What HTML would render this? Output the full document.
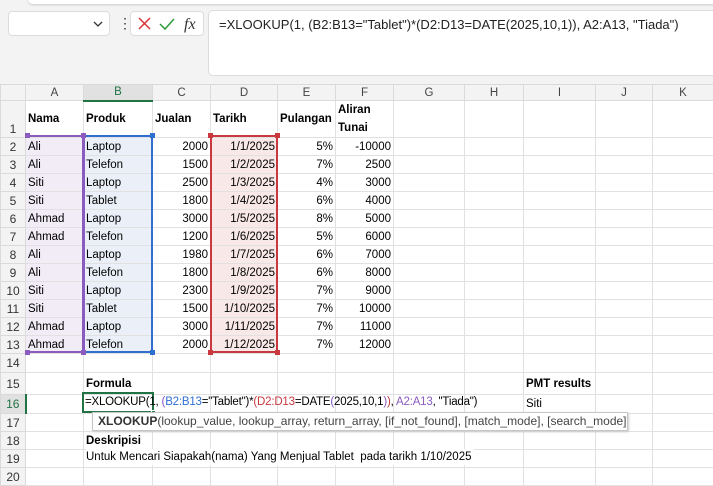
<!DOCTYPE html>
<html><head><meta charset="utf-8"><style>
*{box-sizing:border-box;margin:0;padding:0}
body{width:713px;height:482px;overflow:hidden;background:#f3f3f3;font-family:"Liberation Sans",Arial,sans-serif;position:relative;font-size:12px;color:#000}
.abs{position:absolute}
table{position:absolute;left:0;top:84px;width:713px;border-collapse:collapse;table-layout:fixed;background:#fff}
td{border:1px solid #e1e1e1;height:18px;padding:0 2px;white-space:nowrap;overflow:hidden;font-size:11.5px;line-height:16px;vertical-align:middle}
td.rh{background:#f3f3f3;color:#333;text-align:center;border-color:#dadada;padding:0;font-size:12px}
tr.ch td{background:#f3f3f3;color:#444;text-align:center;height:16px;border-color:#dadada;font-size:11.5px;line-height:14px;vertical-align:middle}
.r{text-align:right}
b{font-weight:bold}
.pu{background:#f1ecf6}.bl{background:#ebf0f8}.rd{background:#f9e8e8}
</style></head><body>
<div class="abs" style="left:28px;top:-6px;width:690px;height:10px;background:#fff;border-radius:6px;box-shadow:0 1px 2px #ccc"></div>
<div class="abs" style="left:8px;top:11px;width:102px;height:25px;background:#fff;border:1px solid #dcdcdc;border-radius:4px"></div>
<svg class="abs" style="left:92px;top:19px" width="12" height="10"><path d="M2 3 L6 7 L10 3" fill="none" stroke="#333" stroke-width="1.3"/></svg>
<div class="abs" style="left:118px;top:15px;width:3px;height:16px;color:#333;font-size:14px;line-height:16px">⋮</div>
<div class="abs" style="left:130px;top:11px;width:74px;height:25px;background:#fff;border:1px solid #dcdcdc;border-radius:4px"></div>
<svg class="abs" style="left:136px;top:15px" width="66" height="18"><path d="M3 3 L14 14 M14 3 L3 14" stroke="#d33" stroke-width="1.5"/><path d="M24 9 L29 14 L38 4" fill="none" stroke="#2e9a3a" stroke-width="1.5"/><text x="48" y="14" font-family="Liberation Serif,serif" font-style="italic" font-size="16" fill="#333">fx</text></svg>
<div class="abs" style="left:208px;top:10px;width:520px;height:66px;background:#fff;border:1px solid #dcdcdc;border-radius:5px"></div>
<div class="abs" style="left:219px;top:17px;font-size:13px;color:#222">=XLOOKUP(1, (B2:B13="Tablet")*(D2:D13=DATE(2025,10,1)), A2:A13, "Tiada")</div>
<table>
<colgroup><col style="width:25px"><col style="width:58px"><col style="width:69px"><col style="width:58px"><col style="width:67px"><col style="width:58px"><col style="width:58px"><col style="width:71px"><col style="width:59px"><col style="width:72px"><col style="width:57px"><col style="width:61px"></colgroup>
<tr class="ch"><td style="background:#f3f3f3"></td><td>A</td><td style="background:#e1e1e1;border-bottom:2px solid #217346;color:#217346">B</td><td>C</td><td>D</td><td>E</td><td>F</td><td>G</td><td>H</td><td>I</td><td>J</td><td>K</td></tr>
<tr><td class="rh" style="height:35px;vertical-align:bottom">1</td><td><b>Nama</b></td><td><b>Produk</b></td><td><b>Jualan</b></td><td><b>Tarikh</b></td><td><b>Pulangan</b></td><td style="line-height:18px"><b>Aliran<br>Tunai</b></td><td></td><td></td><td></td><td></td><td></td></tr>
<tr><td class="rh">2</td><td class="pu">Ali</td><td class="bl">Laptop</td><td class="r">2000</td><td class="r rd">1/1/2025</td><td class="r">5%</td><td class="r">-10000</td><td></td><td></td><td></td><td></td><td></td></tr>
<tr><td class="rh">3</td><td class="pu">Ali</td><td class="bl">Telefon</td><td class="r">1500</td><td class="r rd">1/2/2025</td><td class="r">7%</td><td class="r">2500</td><td></td><td></td><td></td><td></td><td></td></tr>
<tr><td class="rh">4</td><td class="pu">Siti</td><td class="bl">Laptop</td><td class="r">2500</td><td class="r rd">1/3/2025</td><td class="r">4%</td><td class="r">3000</td><td></td><td></td><td></td><td></td><td></td></tr>
<tr><td class="rh">5</td><td class="pu">Siti</td><td class="bl">Tablet</td><td class="r">1800</td><td class="r rd">1/4/2025</td><td class="r">6%</td><td class="r">4000</td><td></td><td></td><td></td><td></td><td></td></tr>
<tr><td class="rh">6</td><td class="pu">Ahmad</td><td class="bl">Laptop</td><td class="r">3000</td><td class="r rd">1/5/2025</td><td class="r">8%</td><td class="r">5000</td><td></td><td></td><td></td><td></td><td></td></tr>
<tr><td class="rh">7</td><td class="pu">Ahmad</td><td class="bl">Telefon</td><td class="r">1200</td><td class="r rd">1/6/2025</td><td class="r">5%</td><td class="r">6000</td><td></td><td></td><td></td><td></td><td></td></tr>
<tr><td class="rh">8</td><td class="pu">Ali</td><td class="bl">Laptop</td><td class="r">1980</td><td class="r rd">1/7/2025</td><td class="r">6%</td><td class="r">7000</td><td></td><td></td><td></td><td></td><td></td></tr>
<tr><td class="rh">9</td><td class="pu">Ali</td><td class="bl">Telefon</td><td class="r">1800</td><td class="r rd">1/8/2025</td><td class="r">6%</td><td class="r">8000</td><td></td><td></td><td></td><td></td><td></td></tr>
<tr><td class="rh">10</td><td class="pu">Siti</td><td class="bl">Laptop</td><td class="r">2300</td><td class="r rd">1/9/2025</td><td class="r">7%</td><td class="r">9000</td><td></td><td></td><td></td><td></td><td></td></tr>
<tr><td class="rh">11</td><td class="pu">Siti</td><td class="bl">Tablet</td><td class="r">1500</td><td class="r rd">1/10/2025</td><td class="r">7%</td><td class="r">10000</td><td></td><td></td><td></td><td></td><td></td></tr>
<tr><td class="rh">12</td><td class="pu">Ahmad</td><td class="bl">Laptop</td><td class="r">3000</td><td class="r rd">1/11/2025</td><td class="r">7%</td><td class="r">11000</td><td></td><td></td><td></td><td></td><td></td></tr>
<tr><td class="rh">13</td><td class="pu">Ahmad</td><td class="bl">Telefon</td><td class="r">2000</td><td class="r rd">1/12/2025</td><td class="r">7%</td><td class="r">12000</td><td></td><td></td><td></td><td></td><td></td></tr>
<tr><td class="rh" style="height:19px">14</td><td></td><td></td><td></td><td></td><td></td><td></td><td></td><td></td><td></td><td></td><td></td></tr>
<tr><td class="rh" style="height:22px">15</td><td></td><td><b>Formula</b></td><td></td><td></td><td></td><td></td><td></td><td></td><td><b>PMT results</b></td><td></td><td></td></tr>
<tr><td class="rh" style="height:19px;background:#e1e1e1;color:#217346;border-right:2px solid #217346">16</td><td></td><td></td><td></td><td></td><td></td><td></td><td></td><td></td><td>Siti</td><td></td><td></td></tr>
<tr><td class="rh">17</td><td></td><td></td><td></td><td></td><td></td><td></td><td></td><td></td><td></td><td></td><td></td></tr>
<tr><td class="rh">18</td><td></td><td><b>Deskripisi</b></td><td></td><td></td><td></td><td></td><td></td><td></td><td></td><td></td><td></td></tr>
<tr><td class="rh">19</td><td></td><td></td><td></td><td></td><td></td><td></td><td></td><td></td><td></td><td></td><td></td></tr>
<tr><td class="rh">20</td><td></td><td></td><td></td><td></td><td></td><td></td><td></td><td></td><td></td><td></td><td></td></tr>
</table>
<div class="abs" style="left:86px;top:449px;font-size:11.5px;line-height:16px;white-space:nowrap;background:#fff;padding-right:2px">Untuk Mencari Siapakah(nama) Yang Menjual Tablet&nbsp; pada tarikh 1/10/2025</div>
<!-- range borders -->
<div class="abs" style="left:27px;top:135px;width:57px;height:218px;border-bottom:2px solid #8a5cc0;border-top:2px solid #8a5cc0;border-right:2px solid #8a5cc0"></div>
<div class="abs" style="left:83px;top:135px;width:70px;height:218px;border:2px solid #2f6fd0;border-left:2px solid #8a5cc0"></div>
<div class="abs" style="left:210px;top:135px;width:68px;height:218px;border:2px solid #c9383f"></div>
<div class="abs" style="left:25px;top:133px;width:5px;height:5px;background:#8a5cc0"></div>
<div class="abs" style="left:81px;top:133px;width:5px;height:5px;background:#8a5cc0"></div>
<div class="abs" style="left:25px;top:350px;width:5px;height:5px;background:#8a5cc0"></div>
<div class="abs" style="left:81px;top:350px;width:5px;height:5px;background:#8a5cc0"></div>
<div class="abs" style="left:150px;top:133px;width:5px;height:5px;background:#2f6fd0"></div>
<div class="abs" style="left:150px;top:350px;width:5px;height:5px;background:#2f6fd0"></div>
<div class="abs" style="left:208px;top:133px;width:5px;height:5px;background:#c9383f"></div>
<div class="abs" style="left:275px;top:133px;width:5px;height:5px;background:#c9383f"></div>
<div class="abs" style="left:208px;top:350px;width:5px;height:5px;background:#c9383f"></div>
<div class="abs" style="left:275px;top:350px;width:5px;height:5px;background:#c9383f"></div>
<!-- active cell -->
<div class="abs" style="left:82px;top:392px;width:72px;height:21px;border:2px solid #217346"></div>
<div class="abs" style="left:151px;top:410px;width:5px;height:5px;background:#217346;border:1px solid #fff"></div>
<div class="abs" style="left:85px;top:394px;font-size:11.5px;letter-spacing:-0.2px;line-height:16px;white-space:nowrap;padding-right:3px">=XLOOKUP(1, <span style="color:#7d55c7">(</span><span style="color:#2f6fd0">B2:B13</span>="Tablet")*<span style="color:#c9383f">(D2:D13</span>=DATE<span style="color:#7d55c7">(</span>2025,10,1<span style="color:#7d55c7">)</span><span style="color:#c9383f">)</span>, <span style="color:#8a5cc0">A2:A13</span>, "Tiada")</div>
<div class="abs" style="left:92px;top:412px;width:536px;height:19px;background:#fff;border:1px solid #c6c6c6;box-shadow:1px 1px 2px #ccc;font-size:12px;line-height:17px;padding-left:5px;color:#444;white-space:nowrap;overflow:hidden"><b style="color:#333">XLOOKUP</b>(lookup_value, lookup_array, return_array, [if_not_found], [match_mode], [search_mode])</div>
</body></html>
